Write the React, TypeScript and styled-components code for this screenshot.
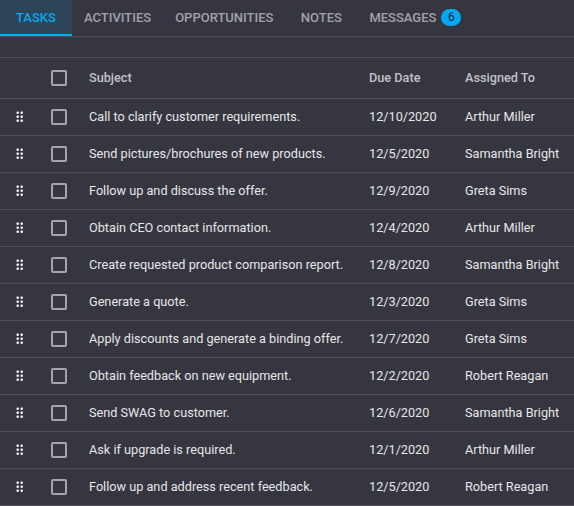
import styled, { createGlobalStyle } from 'styled-components'

const GlobalStyle = createGlobalStyle`
  html, body {
    margin: 0;
    padding: 0;
    background: #363640;
  }
  body {
    font-family: Roboto, "Liberation Sans", sans-serif;
  }
`;

type Task = {
  subject: string
  due: string
  assigned: string
}

const tasks: Task[] = [
  { subject: 'Call to clarify customer requirements.', due: '12/10/2020', assigned: 'Arthur Miller' },
  { subject: 'Send pictures/brochures of new products.', due: '12/5/2020', assigned: 'Samantha Bright' },
  { subject: 'Follow up and discuss the offer.', due: '12/9/2020', assigned: 'Greta Sims' },
  { subject: 'Obtain CEO contact information.', due: '12/4/2020', assigned: 'Arthur Miller' },
  { subject: 'Create requested product comparison report.', due: '12/8/2020', assigned: 'Samantha Bright' },
  { subject: 'Generate a quote.', due: '12/3/2020', assigned: 'Greta Sims' },
  { subject: 'Apply discounts and generate a binding offer.', due: '12/7/2020', assigned: 'Greta Sims' },
  { subject: 'Obtain feedback on new equipment.', due: '12/2/2020', assigned: 'Robert Reagan' },
  { subject: 'Send SWAG to customer.', due: '12/6/2020', assigned: 'Samantha Bright' },
  { subject: 'Ask if upgrade is required.', due: '12/1/2020', assigned: 'Arthur Miller' },
  { subject: 'Follow up and address recent feedback.', due: '12/5/2020', assigned: 'Robert Reagan' },
];

const tabs = ['Tasks', 'Activities', 'Opportunities', 'Notes', 'Messages'];

const Page = styled.div`
  width: 574px;
  height: 506px;
  overflow: hidden;
  background: #363640;
`;

const TabBar = styled.div`
  display: flex;
  height: 36px;
  border-bottom: 1px solid #515159;
`;

const Tab = styled.div<{ $active?: boolean }>`
  display: flex;
  align-items: center;
  justify-content: center;
  gap: 5px;
  min-width: 72px;
  box-sizing: border-box;
  padding: 0 12px 2px;
  font-size: 13px;
  font-weight: 500;
  text-transform: uppercase;
  color: ${p => (p.$active ? '#03a9f4' : '#a2a2aa')};
  background: ${p => (p.$active ? '#2e4458' : 'transparent')};
  box-shadow: ${p => (p.$active ? 'inset 0 -2px 0 #03a9f4' : 'none')};
`;

const Badge = styled.span`
  display: inline-flex;
  align-items: center;
  justify-content: center;
  width: 20px;
  height: 17px;
  border-radius: 9px;
  background: #03a9f4;
  color: #1a1a22;
  font-size: 12px;
  font-weight: 400;
`;

const Toolbar = styled.div`
  height: 20px;
  border-bottom: 1px solid #515159;
`;

const Row = styled.div<{ $header?: boolean }>`
  display: grid;
  grid-template-columns: 38px 43px 280px 96px 1fr;
  align-items: center;
  height: ${p => (p.$header ? '40px' : '36px')};
  border-bottom: 1px solid #515159;
  font-size: 12.7px;
  color: ${p => (p.$header ? '#c2c2c8' : '#e6e6e8')};
  font-weight: ${p => (p.$header ? 500 : 400)};
`;

const Cell = styled.div`
  padding: 0 0 2px 8px;
  white-space: nowrap;
  overflow: hidden;
`;

const HandleCell = styled.div`
  display: flex;
  justify-content: center;
  padding-left: 2px;
`;

const CheckCell = styled.div`
  display: flex;
  padding-left: 13px;
`;

const CheckBox = styled.span`
  width: 16px;
  height: 16px;
  box-sizing: border-box;
  border: 2px solid #a4a4ab;
  border-radius: 2px;
`;

const DragHandle = () => (
  <svg width="8" height="12" viewBox="0 0 8 12">
    {[0, 4, 8].map(y =>
      [0, 4].map(x => (
        <rect key={`${x}-${y}`} x={x + 0.5} y={y + 0.5} width="2.4" height="2.4" rx="0.8" fill="#ffffff" />
      ))
    )}
  </svg>
);

const App = () => {
  return (
    <Page>
      <GlobalStyle />
      <TabBar>
        {tabs.map((t, i) => (
          <Tab key={t} $active={i === 0}>
            {t}
            {t === 'Messages' && <Badge>6</Badge>}
          </Tab>
        ))}
      </TabBar>
      <Toolbar />
      <Row $header>
        <div />
        <CheckCell><CheckBox /></CheckCell>
        <Cell>Subject</Cell>
        <Cell>Due Date</Cell>
        <Cell>Assigned To</Cell>
      </Row>
      {tasks.map(task => (
        <Row key={task.subject}>
          <HandleCell><DragHandle /></HandleCell>
          <CheckCell><CheckBox /></CheckCell>
          <Cell>{task.subject}</Cell>
          <Cell>{task.due}</Cell>
          <Cell>{task.assigned}</Cell>
        </Row>
      ))}
    </Page>
  );
}

export default App;
